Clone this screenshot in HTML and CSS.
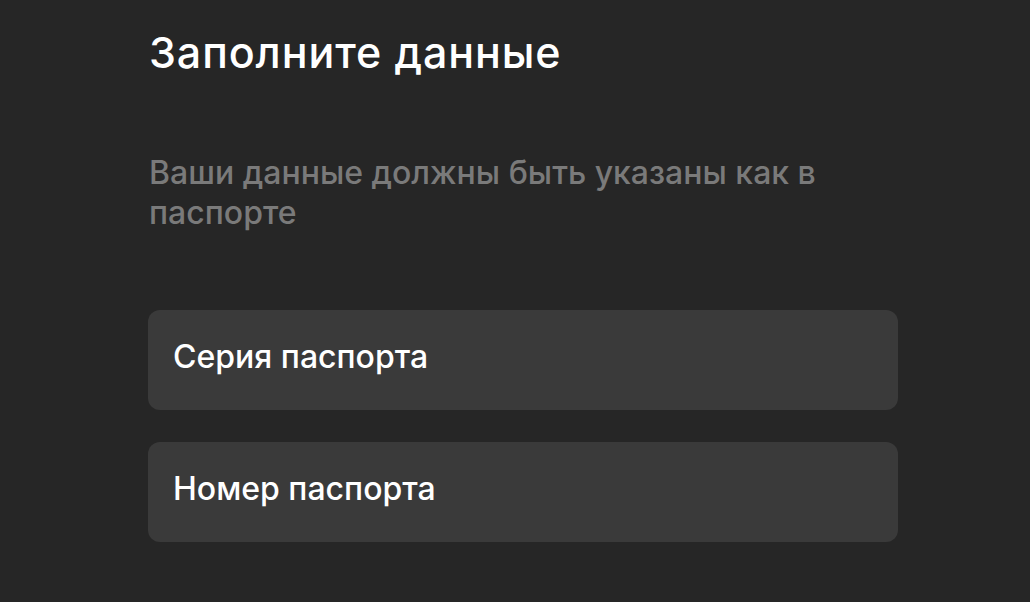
FILE: index.html
```html
<!DOCTYPE html>
<html lang="ru">
<head>
    <meta charset="UTF-8">
    <meta name="viewport" content="width=device-width, initial-scale=1.0">
    <title>Заполните данные</title>
    <link rel="stylesheet" href="styles.css">
</head>
<body>
    <div class="content">
        <h1 class="title">Заполните данные</h1>
        <p class="subtitle">Ваши данные должны быть указаны как в паспорте</p>

        <form class="form">
            <label class="field">
                <input type="text" placeholder="Серия паспорта">
            </label>
            <label class="field">
                <input type="text" placeholder="Номер паспорта">
            </label>
        </form>
    </div>
</body>
</html>
```

FILE: styles.css
```css
body {
    font-family: Inter, "Noto Sans", sans-serif;
    margin: 0;
    padding: 0;
    background-color: #262626;
    color: white;
}

.content {
    width: 750px;
    margin-left: 148px;
    padding-top: 24px;
}

.title {
    margin: 0 0 0 1px;
    font-size: 43px;
    font-weight: 500;
    line-height: 56px;
    letter-spacing: 0.9px;
}

.subtitle {
    margin: 73px 0 0 1px;
    width: 700px;
    font-size: 32px;
    line-height: 40px;
    font-weight: 500;
    color: #7a7a7a;
}

.form {
    margin-top: 77px;
    display: flex;
    flex-direction: column;
    gap: 32px;
}

.field input {
    display: block;
    box-sizing: border-box;
    width: 100%;
    height: 100px;
    padding: 0 25px 8px;
    border: none;
    border-radius: 12px;
    background-color: #3a3a3a;
    font-family: inherit;
    font-size: 32px;
    font-weight: 500;
    color: white;
    outline: none;
}

.field input::placeholder {
    color: white;
    opacity: 1;
}
```
